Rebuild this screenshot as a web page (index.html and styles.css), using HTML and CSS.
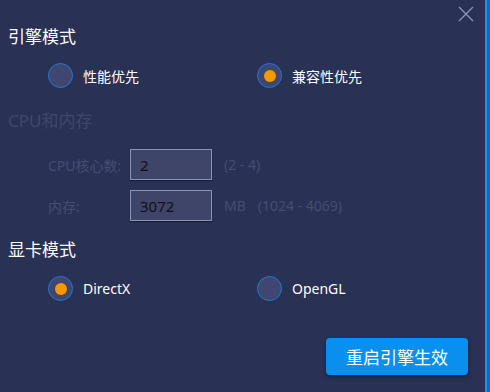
FILE: index.html
```html
<!DOCTYPE html>
<html lang="zh-CN">
<head>
    <meta charset="UTF-8">
    <title>引擎设置</title>
    <link rel="stylesheet" href="styles.css">
</head>
<body>
    <div class="panel">
        <div class="close">
            <svg width="16" height="16" viewBox="0 0 16 16"><path d="M1 1 L15 15 M15 1 L1 15" stroke="#8b94b8" stroke-width="1.4" fill="none"/></svg>
        </div>

        <h2 class="title">引擎模式</h2>
        <div class="radio-row">
            <label class="radio"><span class="dot"></span>性能优先</label>
            <label class="radio checked"><span class="dot"></span>兼容性优先</label>
        </div>

        <h2 class="title disabled">CPU和内存</h2>
        <div class="field">
            <span class="field-label">CPU核心数:</span>
            <div class="input">2</div>
            <span class="hint">(2 - 4)</span>
        </div>
        <div class="field">
            <span class="field-label">内存:</span>
            <div class="input">3072</div>
            <span class="hint">MB</span>
            <span class="hint range">(1024 - 4069)</span>
        </div>

        <h2 class="title gpu">显卡模式</h2>
        <div class="radio-row">
            <label class="radio checked"><span class="dot"></span>DirectX</label>
            <label class="radio"><span class="dot"></span>OpenGL</label>
        </div>

        <div class="actions">
            <button class="apply">重启引擎生效</button>
        </div>
    </div>
    <div class="edge"></div>
</body>
</html>
```

FILE: styles.css
```css
body {
    margin: 0;
    width: 490px;
    height: 392px;
    display: flex;
    overflow: hidden;
    font-family: "Noto Sans", "Noto Sans CJK SC", sans-serif;
    background-color: #293155;
}

.panel {
    position: relative;
    width: 477px;
    height: 392px;
    padding-left: 8px;
    background-color: #293155;
    color: #fff;
}

.edge {
    flex: 1;
    border-left: 2px solid #1b93ff;
    background-color: #1763d2;
}

.close {
    position: absolute;
    top: 5px;
    right: 11px;
    width: 16px;
    height: 16px;
}

.title {
    margin: 27px 0 0;
    font-size: 17px;
    font-weight: normal;
    line-height: 20px;
    color: #fff;
}

.title.disabled {
    margin-top: 23px;
    color: #3f4869;
}

.title.gpu {
    margin-top: 19px;
}

.radio-row {
    display: grid;
    grid-template-columns: 209px auto;
    margin: 16px 0 0 40px;
    height: 25px;
}

.radio {
    display: flex;
    align-items: center;
    font-size: 14px;
    color: #fff;
}

.dot {
    width: 23px;
    height: 23px;
    margin-right: 10px;
    border: 1px solid #1b7ad9;
    border-radius: 50%;
    background-color: #3f4670;
    display: flex;
    align-items: center;
    justify-content: center;
}

.radio.checked .dot::after {
    content: '';
    width: 12px;
    height: 12px;
    border-radius: 50%;
    background-color: #f49a00;
}

.field {
    display: flex;
    align-items: center;
    height: 31px;
    margin: 10px 0 0 40px;
    font-size: 14px;
    color: #454e72;
}

.title.disabled + .field {
    margin-top: 18px;
}

.field-label {
    width: 82px;
}

.input {
    box-sizing: border-box;
    width: 82px;
    height: 31px;
    padding: 0 9px;
    border: 1px solid #8a93b8;
    background-color: #3e4569;
    box-shadow: 0 1px 1px rgba(0, 0, 0, 0.4);
    color: #111;
    font-size: 15px;
    line-height: 31px;
}

.hint {
    margin-left: 12px;
}

.hint.range {
    margin-left: 12px;
}

.actions {
    display: flex;
    justify-content: flex-end;
    margin: 37px 17px 0 0;
}

.apply {
    width: 142px;
    height: 37px;
    border: none;
    border-radius: 4px;
    background-color: #0990ef;
    box-shadow: 0 2px 4px rgba(0, 0, 0, 0.35);
    color: #fff;
    font-family: inherit;
    font-size: 17px;
    cursor: pointer;
}
```
